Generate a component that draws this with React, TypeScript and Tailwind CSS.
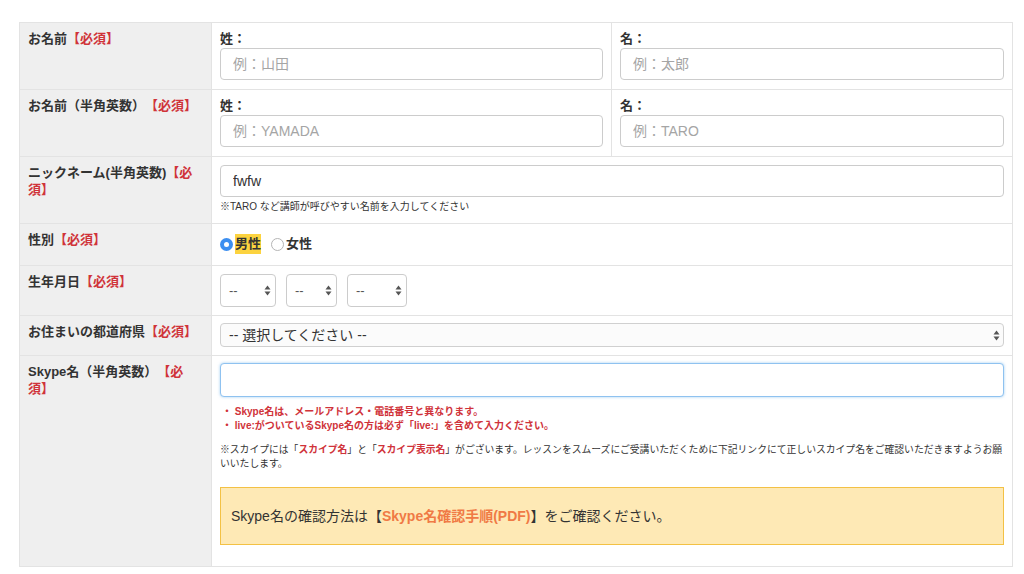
import React from "react";

const font = {
  fontFamily: '"Liberation Sans", "Noto Sans CJK JP", sans-serif',
};

function Req() {
  return <span className="text-[#d0333a]">【必須】</span>;
}

function Arrows() {
  return (
    <svg width="7" height="11" viewBox="0 0 7 11" className="shrink-0">
      <path d="M3.5 0.5 L6.5 4.5 L0.5 4.5 Z" fill="#555" />
      <path d="M3.5 10.5 L6.5 6.5 L0.5 6.5 Z" fill="#555" />
    </svg>
  );
}

function Label({ children }: { children: React.ReactNode }) {
  return (
    <div className="bg-[#efefef] border-r border-[#e3e3e3] px-2 pt-[7px] pb-2 text-[13px] leading-[17px] font-bold text-[#333]">
      {children}
    </div>
  );
}

function TextInput({
  placeholder,
  value,
}: {
  placeholder?: string;
  value?: string;
}) {
  return (
    <input
      className="block w-full h-[32px] rounded-[4px] border border-[#cccccc] bg-white px-3 text-[14px] text-[#333] placeholder:text-[#a5a5a5] outline-none"
      placeholder={placeholder}
      defaultValue={value}
    />
  );
}

function SmallSelect({ width }: { width: string }) {
  return (
    <div
      className={`${width} h-[33px] rounded-[4px] border border-[#cccccc] bg-white flex items-center justify-between pl-[8px] pr-[4px] text-[13px] text-[#555]`}
    >
      <span>--</span>
      <Arrows />
    </div>
  );
}

function NameRow({
  label,
  last,
  first,
}: {
  label: React.ReactNode;
  last: string;
  first: string;
}) {
  return (
    <div className="grid grid-cols-[192px_1fr] border-b border-[#e3e3e3]">
      <Label>{label}</Label>
      <div className="grid grid-cols-2">
        <div className="border-r border-[#e3e3e3] px-2 pt-[7px] pb-[9px]">
          <div className="text-[13px] leading-[17px] font-semibold text-[#333] mb-[1px]">姓：</div>
          <TextInput placeholder={last} />
        </div>
        <div className="px-2 pt-[7px] pb-[9px]">
          <div className="text-[13px] leading-[17px] font-semibold text-[#333] mb-[1px]">名：</div>
          <TextInput placeholder={first} />
        </div>
      </div>
    </div>
  );
}

export default function App() {
  return (
    <div
      className="min-h-screen bg-white pt-[22px] pl-[19px] [text-spacing-trim:space-all]"
      style={font}
    >
      <div className="w-[994px] border border-b-0 border-[#e3e3e3]">
        <NameRow
          label={
            <>
              お名前<Req />
            </>
          }
          last="例：山田"
          first="例：太郎"
        />
        <NameRow
          label={
            <>
              お名前（半角英数）<Req />
            </>
          }
          last="例：YAMADA"
          first="例：TARO"
        />

        <div className="grid grid-cols-[192px_1fr] border-b border-[#e3e3e3]">
          <Label>
            ニックネーム(半角英数)<Req />
          </Label>
          <div className="px-2 pt-[8px] pb-[9px]">
            <TextInput value="fwfw" />
            <div className="mt-[3px] text-[10px] leading-[14px] text-[#333]">
              ※TARO など講師が呼びやすい名前を入力してください
            </div>
          </div>
        </div>

        <div className="grid grid-cols-[192px_1fr] border-b border-[#e3e3e3]">
          <Label>
            性別<Req />
          </Label>
          <div className="px-2 pt-[10px] pb-[11px] flex items-center gap-[10px] text-[13px] font-bold text-[#333]">
            <label className="flex items-center gap-[2px]">
              <span className="w-[13px] h-[13px] rounded-full bg-[#3d8ff0] flex items-center justify-center">
                <span className="w-[5px] h-[5px] rounded-full bg-white" />
              </span>
              <span className="bg-[#fcd33f] leading-[20px]">男性</span>
            </label>
            <label className="flex items-center gap-[2px]">
              <span className="w-[13px] h-[13px] rounded-full border border-[#b5b5b5] bg-white" />
              <span className="leading-[20px]">女性</span>
            </label>
          </div>
        </div>

        <div className="grid grid-cols-[192px_1fr] border-b border-[#e3e3e3]">
          <Label>
            生年月日<Req />
          </Label>
          <div className="px-2 pt-[8px] pb-[8px] flex items-center gap-[10px]">
            <SmallSelect width="w-[56px]" />
            <SmallSelect width="w-[51px]" />
            <SmallSelect width="w-[60px]" />
          </div>
        </div>

        <div className="grid grid-cols-[192px_1fr] border-b border-[#e3e3e3]">
          <Label>
            お住まいの都道府県<Req />
          </Label>
          <div className="px-2 pt-[7px] pb-[8px]">
            <div className="h-[24px] rounded-[4px] border border-[#d0d0d0] bg-[#fbfbfb] flex items-center justify-between pl-[8px] pr-[3px] text-[14px] text-[#333]">
              <span>-- 選択してください --</span>
              <Arrows />
            </div>
          </div>
        </div>

        <div className="grid grid-cols-[192px_1fr] border-b border-[#e3e3e3]">
          <Label>
            Skype名（半角英数）<Req />
          </Label>
          <div className="px-2 pt-[7px] pb-[21px]">
            <input className="block w-full h-[34px] rounded-[4px] border border-[#8fc2f0] bg-white px-3 text-[14px] outline-none shadow-[0_0_3px_rgba(102,175,233,0.6)]" />
            <div className="mt-[8px] pl-[2px] text-[10px] leading-[14px] font-bold text-[#d0333a]">
              <div>・ Skype名は、メールアドレス・電話番号と異なります。</div>
              <div>・ live:がついているSkype名の方は必ず「live:」を含めて入力ください。</div>
            </div>
            <p className="mt-[10px] text-[9.8px] leading-[14px] text-[#333]">
              ※スカイプには「<span className="font-bold text-[#d0333a]">スカイプ名</span>」と「
              <span className="font-bold text-[#d0333a]">スカイプ表示名</span>
              」がございます。レッスンをスムーズにご受講いただくために下記リンクにて正しいスカイプ名をご確認いただきますようお願いいたします。
            </p>
            <div className="mt-[16px] h-[58px] border border-[#f3c144] bg-[#fee9b5] flex items-center px-[10px] text-[14px] text-[#333]">
              Skype名の確認方法は【
              <span className="font-bold text-[#f07a45]">Skype名確認手順(PDF)</span>
              】をご確認ください。
            </div>
          </div>
        </div>
      </div>
    </div>
  );
}
